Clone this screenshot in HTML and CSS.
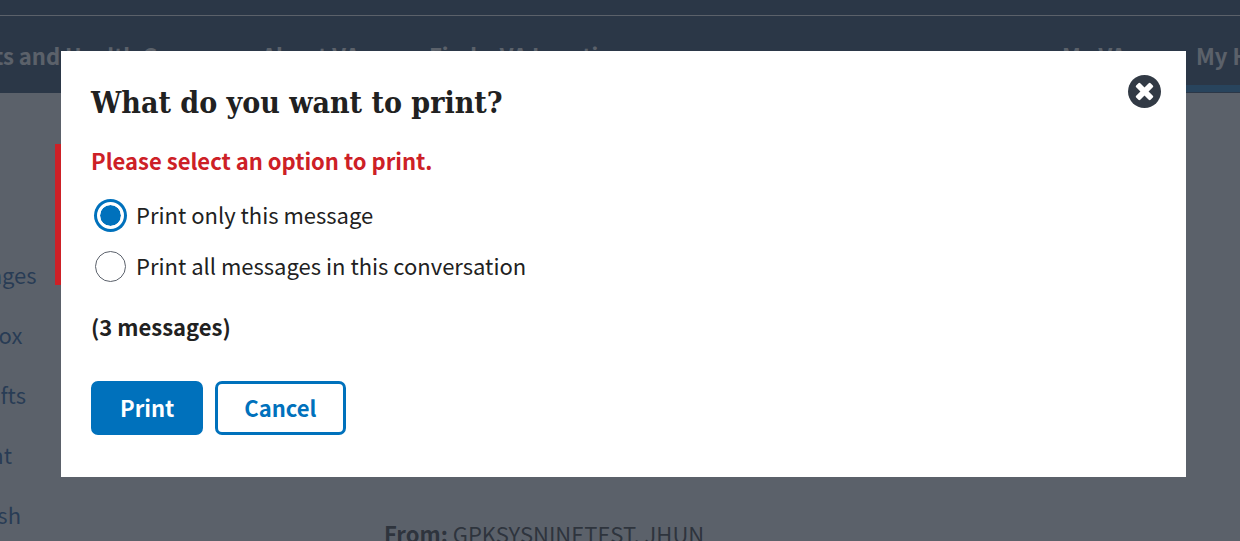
FILE: index.html
```html
<!DOCTYPE html>
<html lang="en">
<head>
<meta charset="utf-8">
<meta name="viewport" content="width=device-width, initial-scale=1">
<title>Print messages</title>
<link rel="stylesheet" href="styles.css">
</head>
<body>
<div class="page">
  <header class="header">
    <nav class="nav">
      <a class="nav-item nav-item-benefits" href="#">VA Benefits and Health Care</a>
      <a class="nav-item" href="#">About VA</a>
      <a class="nav-item" href="#">Find a VA Location</a>
      <a class="nav-item" href="#">My VA</a>
      <a class="nav-item nav-item-current" href="#">My Health</a>
    </nav>
  </header>
  <div class="content">
    <nav class="sidebar">
      <a class="folder folder-parent" href="#">Messages</a>
      <a class="folder" href="#">Inbox</a>
      <a class="folder" href="#">Drafts</a>
      <a class="folder" href="#">Sent</a>
      <a class="folder" href="#">Trash</a>
    </nav>
    <main class="message">
      <p class="from"><b>From:</b> GPKSYSNINETEST, JHUN</p>
    </main>
  </div>
</div>

<div class="overlay">
  <section class="modal" role="dialog" aria-modal="true" aria-labelledby="modal-title">
    <button class="close" type="button" aria-label="Close">
      <svg class="close-icon" viewBox="0 0 33 33" aria-hidden="true">
        <circle cx="16.5" cy="16.5" r="16.5" fill="#323a45"/>
        <g fill="#fff" transform="rotate(45 16.5 16.5)">
          <rect x="6.3" y="13.6" width="20.4" height="5.8" rx="1.3"/>
          <rect x="13.6" y="6.3" width="5.8" height="20.4" rx="1.3"/>
        </g>
      </svg>
    </button>
    <h1 class="title" id="modal-title">What do you want to print?</h1>
    <form class="form">
      <p class="error" role="alert">Please select an option to print.</p>
      <div class="options">
        <div class="option">
          <input class="radio" type="radio" name="scope" id="scope-one" checked>
          <label class="option-label" for="scope-one">Print only this message</label>
        </div>
        <div class="option">
          <input class="radio" type="radio" name="scope" id="scope-all">
          <label class="option-label" for="scope-all">Print all messages in this conversation</label>
        </div>
      </div>
      <p class="count">(3 messages)</p>
      <div class="actions">
        <button class="button button-primary" type="button">Print</button>
        <button class="button" type="button">Cancel</button>
      </div>
    </form>
  </section>
</div>
</body>
</html>
```
FILE: styles.css
```css
* {
  box-sizing: border-box;
}

body {
  margin: 0;
  overflow: hidden;
  background: #fff;
  color: #212121;
  font-family: "Noto Sans CJK SC", "Noto Sans", sans-serif;
  font-size: 22px;
  line-height: 30px;
}

p,
h1 {
  margin: 0;
}

a {
  color: #004795;
  text-decoration: none;
}

.page {
  height: 100vh;
  overflow: hidden;
}

.header {
  padding: 15px 0 1px;
  background: #112e51;
}

.nav {
  display: grid;
  grid-template-columns: 262px 167px 1fr 122px 56px;
  border-top: 1px solid #fff;
}

.nav-item {
  padding: 24px 0 15px;
  border-bottom: 7px solid transparent;
  color: #fff;
  font-weight: 700;
  white-space: nowrap;
}

.nav-item-benefits {
  display: flex;
  justify-content: flex-end;
  padding-right: 70px;
}

.nav-item-current {
  padding-left: 12px;
  border-bottom-color: #0071bc;
}

.content {
  display: grid;
  grid-template-columns: 384px 1fr;
}

.sidebar {
  display: flex;
  flex-direction: column;
  gap: 30px;
  padding-top: 166px;
}

.folder {
  margin-left: -35px;
}

.folder-parent {
  margin-left: -61px;
}

.message {
  padding-top: 425px;
}

.overlay {
  position: fixed;
  inset: 0;
  padding: 51px 54px 64px 61px;
  background: rgba(50, 58, 69, 0.8);
}

.modal {
  position: relative;
  padding: 32px 30px 42px;
  background: #fff;
}

/* Alert accent that shows beside the dialog */
.modal::before {
  content: "";
  position: absolute;
  top: 93px;
  left: -6px;
  width: 6px;
  height: 141px;
  background: #cd2026;
}

.close {
  position: absolute;
  top: 24px;
  right: 25px;
  padding: 0;
  border: 0;
  background: none;
}

.close-icon {
  display: block;
  width: 33px;
  height: 33px;
}

.title {
  font-family: "DejaVu Serif Condensed", "DejaVu Serif", serif;
  font-size: 30px;
  font-weight: 700;
  line-height: 40px;
}

.error {
  margin-top: 22px;
  color: #cd2026;
  font-weight: 700;
}

.options {
  display: grid;
  gap: 18px;
  margin: 24px 0 28px 3px;
}

.option {
  display: grid;
  grid-template-columns: 33px 1fr;
  align-items: center;
  gap: 9px;
  height: 33px;
}

.option-label {
  padding-bottom: 3px;
}

.radio {
  appearance: none;
  justify-self: center;
  width: 31px;
  height: 31px;
  margin: 0;
  border: 1px solid #5b616b;
  border-radius: 50%;
  background: #fff;
}

.radio:checked {
  width: 27px;
  height: 27px;
  border: 3px solid #fff;
  background: #0071bc;
  background-clip: padding-box;
  box-shadow: 0 0 0 3px #0071bc;
}

.count {
  font-weight: 700;
}

.actions {
  display: flex;
  gap: 12px;
  margin-top: 40px;
}

.button {
  padding: 8px 26px 10px;
  border: 3px solid #0071bc;
  border-radius: 7px;
  background: #fff;
  color: #0071bc;
  font: inherit;
  font-weight: 700;
}

.button-primary {
  background: #0071bc;
  color: #fff;
}
```
